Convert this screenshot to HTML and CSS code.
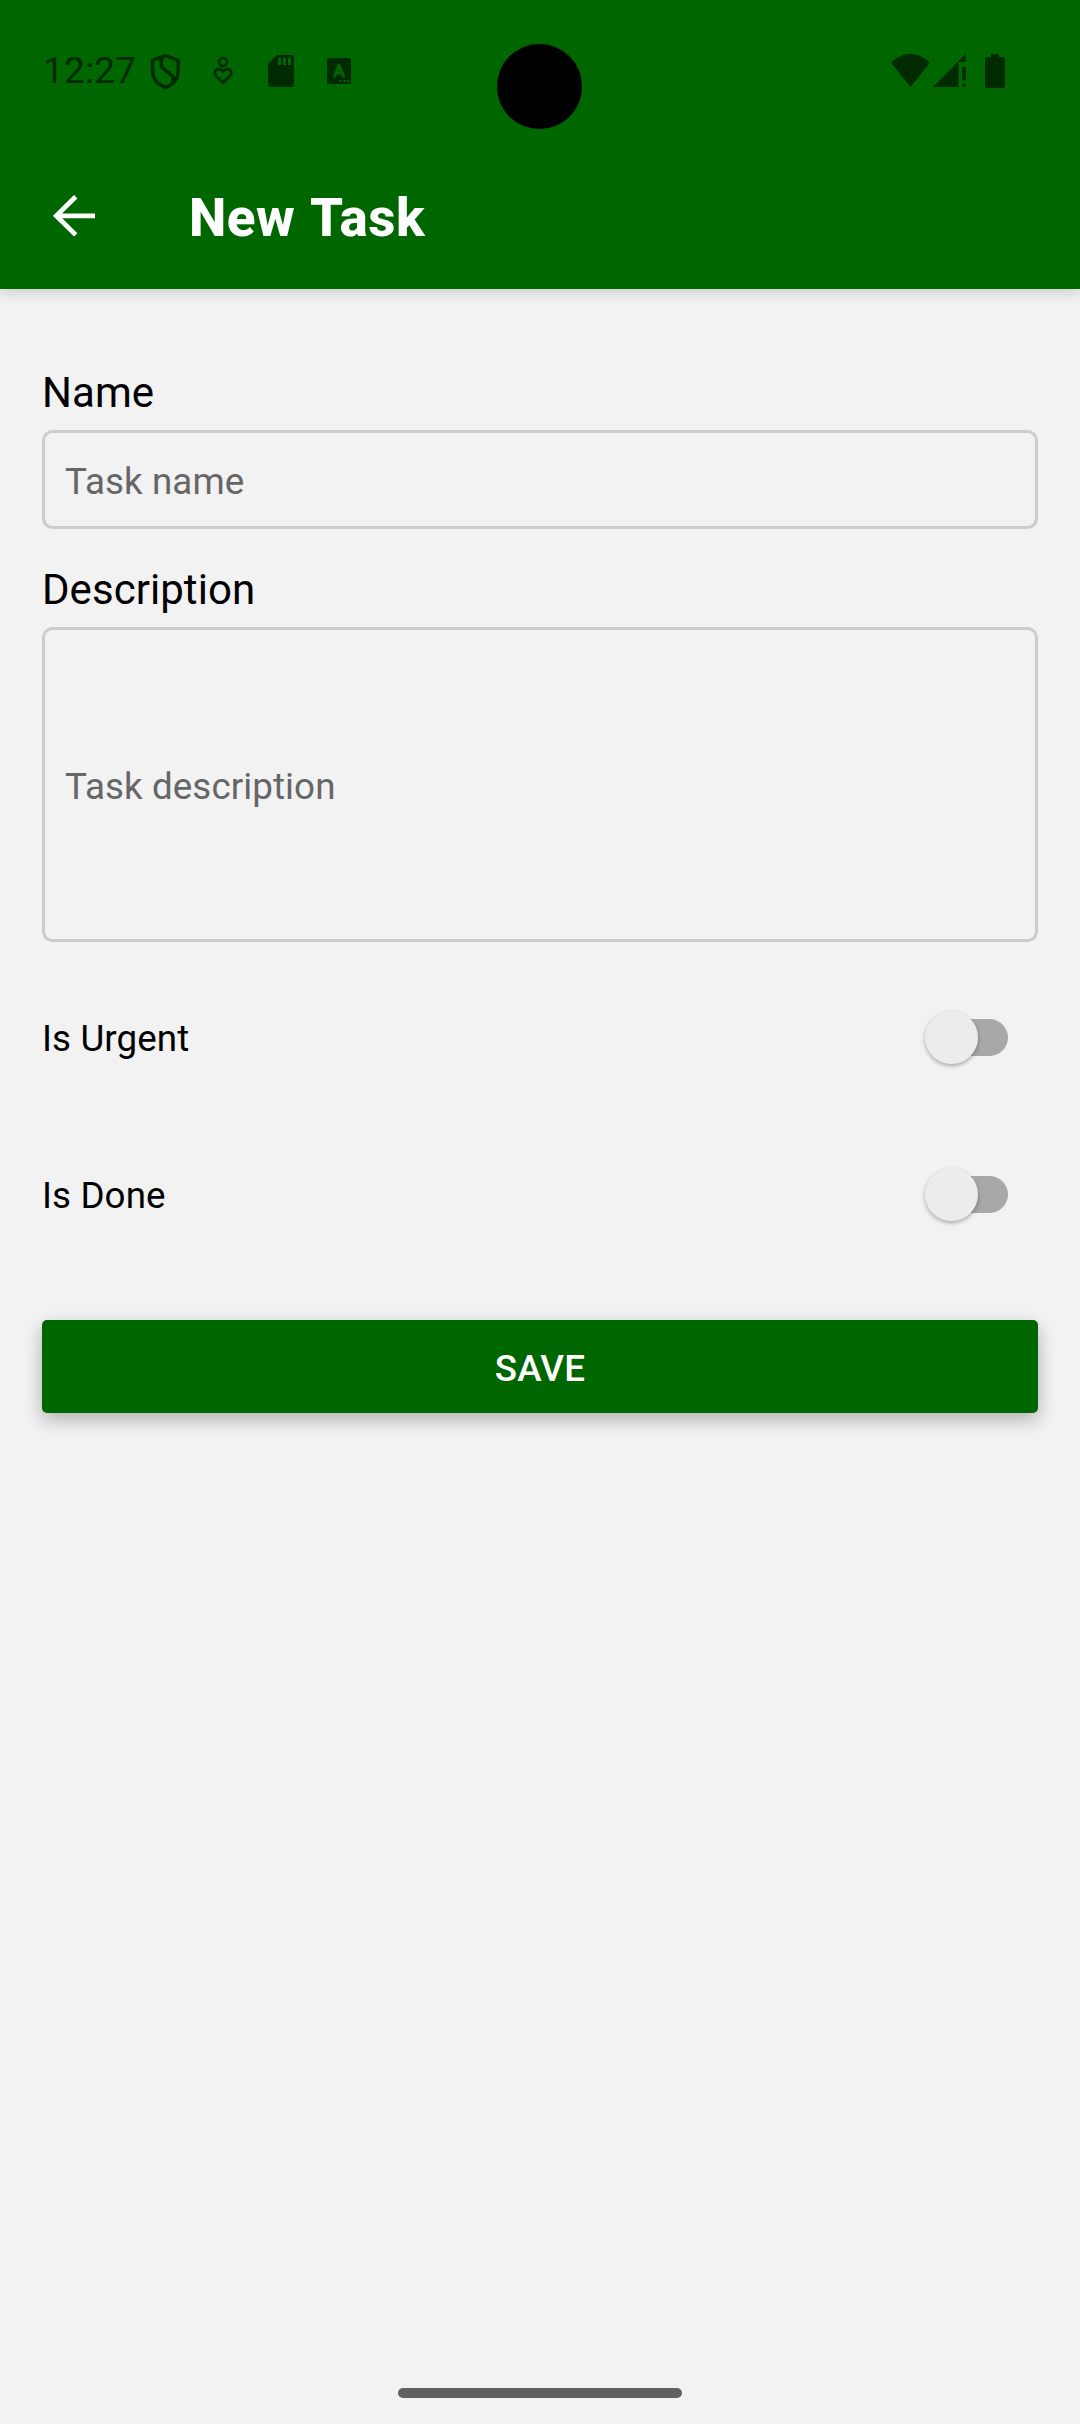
FILE: index.html
```html
<!DOCTYPE html>
<html lang="en">
<head>
<meta charset="utf-8">
<title>New Task</title>
<link rel="stylesheet" href="styles.css">
</head>
<body>
<div class="screen">
  <header class="header">
    <div class="status">
      <span class="clock">12:27</span>
      <svg class="status-left" width="220" height="44" viewBox="0 0 220 44">
        <g fill="none" stroke="#002b00">
          <path stroke-width="3.4" stroke-linejoin="round" d="M15.500 5.500L28.300 10.300V20C28.300 28.500 23.500 34.500 15.500 37.500C7.500 34.500 2.500 28.500 2.500 20V10.300Z"/>
          <path stroke-width="3.400" d="M12.500 7C9.500 13 11 17.500 15.500 20.500C22 24.500 24.500 27 22.500 33"/>
          <circle cx="73" cy="12" r="4" stroke-width="2.600"/>
          <path stroke-width="2.800" stroke-linejoin="miter" d="M73 32.500L66.500 26.500C61.500 21.500 68.500 16 73 21.500C77.500 16 84.500 21.500 79.500 26.500Z"/>
        </g>
        <path fill="#002b00" d="M127 5H141.500Q144 5 144 7.500V34.500Q144 37 141.500 37H120.500Q118 37 118 34.500V14Z"/>
        <path fill="#060" d="M128 8h3v7h-3zM133 8h3v7h-3zM138 8h3v7h-3z"/>
        <rect x="177" y="8" width="24" height="26" rx="2" fill="#002b00"/>
        <path fill="none" stroke="#060" stroke-width="3" stroke-linecap="round" stroke-linejoin="round" d="M184.500 26L189 15.500L193.500 26M186 23H192"/>
        <path fill="#060" d="M189.500 30h2v2h-2zM193.500 30h2v2h-2zM197.300 30h2v2h-2z"/>
      </svg>
      <svg class="status-right" width="120" height="44" viewBox="0 0 120 44" fill="#002b00">
        <path d="M1 12.700Q20.300 -5 40 12.700L20.500 37Z"/>
        <path d="M75.800 4V12H68.500V37H43Z"/>
        <path d="M72.300 17h3.500v13.300h-3.500zM72.300 33.500h3.500v3.500h-3.500z"/>
        <path d="M101 4h8v3h4q2 0 2 2v27q0 2-2 2h-16q-2 0-2-2v-27q0-2 2-2h4z"/>
      </svg>
    </div>
    <div class="camera"></div>
    <div class="toolbar">
      <svg class="back" width="42" height="42" viewBox="0 0 42 42">
        <path fill="none" stroke="#fff" stroke-width="4.800" d="M42 20.800H3.500M22.700 1.700L3.300 20.800L22.700 39.900"/>
      </svg>
      <h1 class="title">New Task</h1>
    </div>
  </header>
  <main class="form">
    <label class="label" for="name">Name</label>
    <input class="field name" id="name" placeholder="Task name">
    <label class="label label-desc" for="desc">Description</label>
    <input class="field desc" id="desc" placeholder="Task description">
    <div class="row"><span class="row-label">Is Urgent</span><span class="switch"><span class="thumb"></span></span></div>
    <div class="row"><span class="row-label">Is Done</span><span class="switch"><span class="thumb"></span></span></div>
    <button class="save">SAVE</button>
  </main>
  <div class="home"></div>
</div>
</body>
</html>
```
FILE: styles.css
```css
* { box-sizing: border-box; }
body { margin: 0; font-family: Roboto, sans-serif; }
.screen {
  width: 1080px; height: 2424px; background: #f2f2f2; color: #000;
  display: flex; flex-direction: column; align-items: center; overflow: hidden;
}
.header {
  position: relative; width: 100%; height: 289px; flex: none;
  background: #060; box-shadow: 0 3px 14px rgba(0,0,0,.17);
}
.status { height: 142px; padding: 50px 68px 0 43px; display: flex; align-items: flex-start; }
.clock { width: 107px; font-size: 37px; line-height: 41px; color: #002b00; white-space: nowrap; letter-spacing: .2px; }
.status-right { margin-left: auto; margin-right: 2px; }
.camera {
  position: absolute; left: 497px; top: 44px; width: 84.5px; height: 84.5px;
  border-radius: 50%; background: #000;
}
.toolbar { height: 147px; display: flex; align-items: center; padding: 0 53px; }
.back { flex: none; }
.title { margin: 5px 0 0 94px; font-size: 53px; line-height: 62px; font-weight: 800; color: #fff; letter-spacing: .5px; word-spacing: 2.5px; }
.form { width: 996px; padding-top: 76px; display: flex; flex-direction: column; }
.label { height: 65px; font-size: 42px; line-height: 56px; letter-spacing: .05px; }
.label-desc { height: 65px; margin-top: 33px; }
.field {
  width: 100%; border: 3px solid #ccc; border-radius: 10.5px; background: none;
  padding: 4px 20px 0; font: 36.75px Roboto, sans-serif; color: #000; letter-spacing: .08px; outline: 0;
}
.field::placeholder { color: #666; opacity: 1; }
.name { height: 99px; }
.desc { height: 315px; }
.row { height: 157px; display: flex; align-items: center; justify-content: space-between; }
.form .desc + .row { margin-top: 17px; }
.row-label { font-size: 36.75px; line-height: 44px; letter-spacing: .1px; padding-top: 2px; }
.switch {
  width: 74px; height: 37px; margin-right: 30px; border-radius: 19px; background: #a8a8a8;
  display: flex; align-items: center;
}
.thumb {
  width: 52.5px; height: 52.5px; margin-left: -9px; flex: none; border-radius: 50%;
  background: #ececec; box-shadow: 0 2px 4px rgba(0,0,0,.3);
}
.save {
  height: 93px; margin-top: 47px; border: 0; border-radius: 5px; background: #060; color: #fff;
  font: 500 36.75px Roboto, sans-serif; letter-spacing: .2px; padding: 3px 0 0; box-shadow: 0 7px 18px rgba(0,0,0,.27);
}
.home { width: 284px; height: 10px; border-radius: 5px; background: #606060; margin: auto 0 26px; }
```
